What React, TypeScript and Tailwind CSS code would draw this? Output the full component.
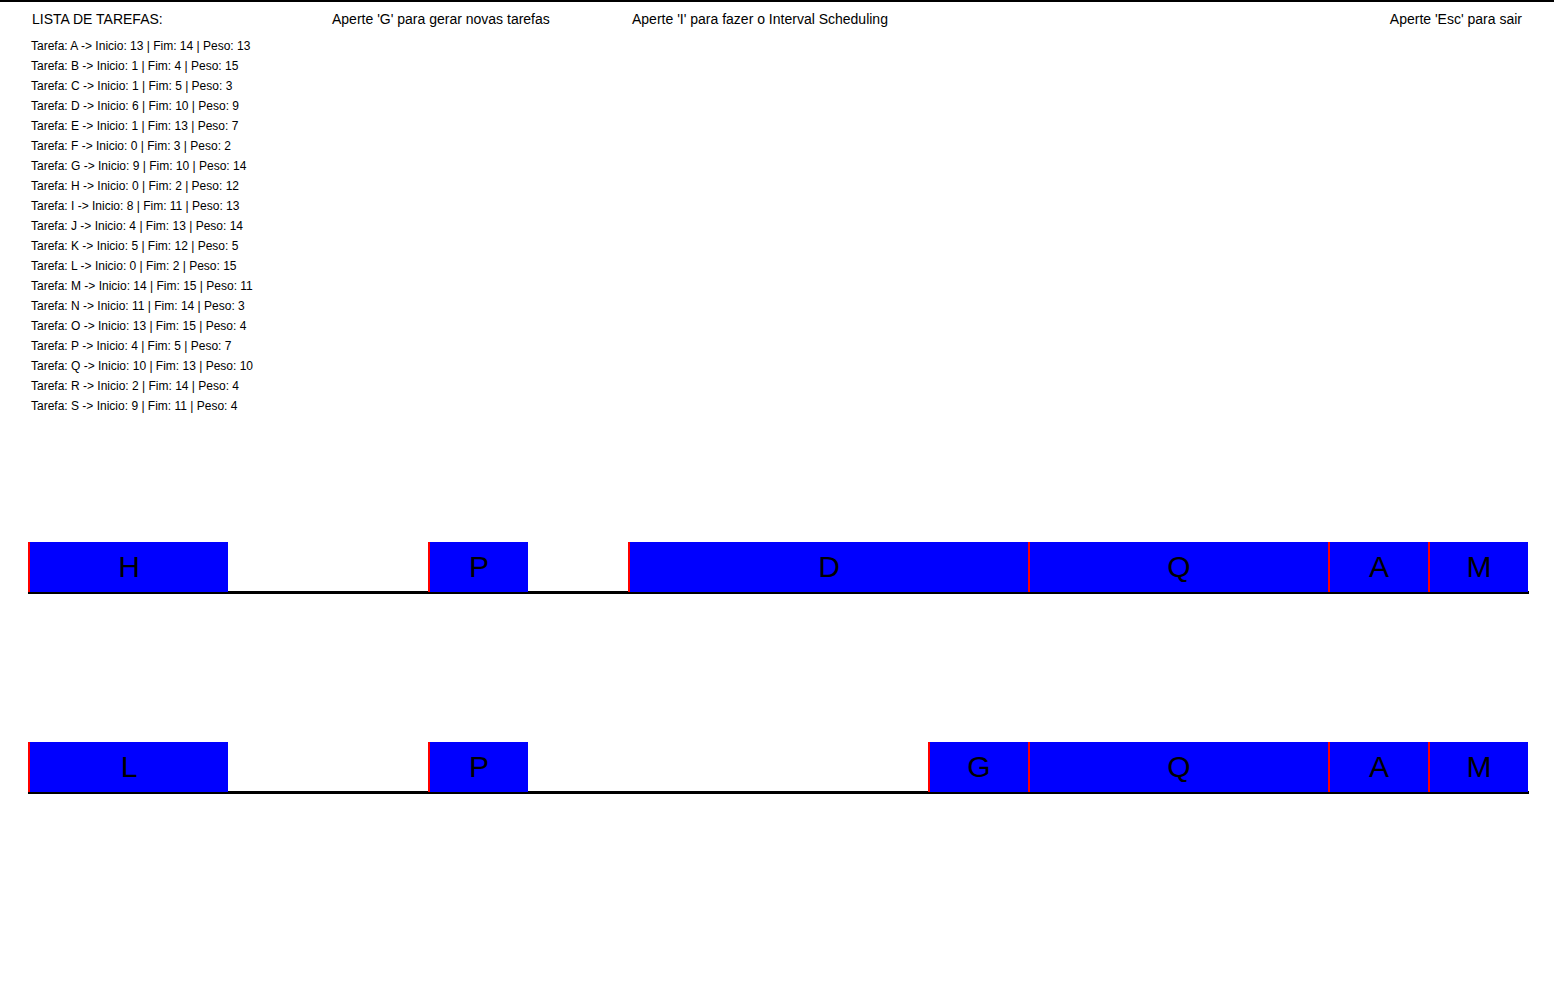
const TASKS = [
  "Tarefa: A -> Inicio: 13 | Fim: 14 | Peso: 13",
  "Tarefa: B -> Inicio: 1 | Fim: 4 | Peso: 15",
  "Tarefa: C -> Inicio: 1 | Fim: 5 | Peso: 3",
  "Tarefa: D -> Inicio: 6 | Fim: 10 | Peso: 9",
  "Tarefa: E -> Inicio: 1 | Fim: 13 | Peso: 7",
  "Tarefa: F -> Inicio: 0 | Fim: 3 | Peso: 2",
  "Tarefa: G -> Inicio: 9 | Fim: 10 | Peso: 14",
  "Tarefa: H -> Inicio: 0 | Fim: 2 | Peso: 12",
  "Tarefa: I -> Inicio: 8 | Fim: 11 | Peso: 13",
  "Tarefa: J -> Inicio: 4 | Fim: 13 | Peso: 14",
  "Tarefa: K -> Inicio: 5 | Fim: 12 | Peso: 5",
  "Tarefa: L -> Inicio: 0 | Fim: 2 | Peso: 15",
  "Tarefa: M -> Inicio: 14 | Fim: 15 | Peso: 11",
  "Tarefa: N -> Inicio: 11 | Fim: 14 | Peso: 3",
  "Tarefa: O -> Inicio: 13 | Fim: 15 | Peso: 4",
  "Tarefa: P -> Inicio: 4 | Fim: 5 | Peso: 7",
  "Tarefa: Q -> Inicio: 10 | Fim: 13 | Peso: 10",
  "Tarefa: R -> Inicio: 2 | Fim: 14 | Peso: 4",
  "Tarefa: S -> Inicio: 9 | Fim: 11 | Peso: 4",
]

type Slot = { name: string; start: number; end: number }

const GREEDY: Slot[] = [
  { name: "H", start: 0, end: 2 },
  { name: "P", start: 4, end: 5 },
  { name: "D", start: 6, end: 10 },
  { name: "Q", start: 10, end: 13 },
  { name: "A", start: 13, end: 14 },
  { name: "M", start: 14, end: 15 },
]

const WEIGHTED: Slot[] = [
  { name: "L", start: 0, end: 2 },
  { name: "P", start: 4, end: 5 },
  { name: "G", start: 9, end: 10 },
  { name: "Q", start: 10, end: 13 },
  { name: "A", start: 13, end: 14 },
  { name: "M", start: 14, end: 15 },
]

function Timeline({ slots }: { slots: Slot[] }) {
  return (
    <div className="relative ml-[28px] h-[52px] w-[1501px] border-b-[3px] border-black">
      <div className="flex h-[49px] w-[1500px]">
        {slots.map((s, i) => {
          const prev = i === 0 ? 0 : slots[i - 1].end
          return (
            <div
              key={s.name}
              className="flex h-[50px] shrink-0 items-center justify-center border-l-2 border-[#ff0000] bg-[#0000ff] text-[30px] leading-none text-black"
              style={{ width: (s.end - s.start) * 100, marginLeft: (s.start - prev) * 100 }}
            >
              {s.name}
            </div>
          )
        })}
      </div>
    </div>
  )
}

export default function App() {
  return (
    <div className="h-[1005px] w-[1554px] overflow-hidden border-t-2 border-black bg-white font-['Liberation_Sans',Arial,sans-serif] text-black">
      <div className="flex h-[34px] items-center pl-[32px] pr-[32px] text-sm">
        <span className="w-[300px]">LISTA DE TAREFAS:</span>
        <span className="w-[300px]">Aperte 'G' para gerar novas tarefas</span>
        <span>Aperte 'I' para fazer o Interval Scheduling</span>
        <span className="ml-auto">Aperte 'Esc' para sair</span>
      </div>
      <ul className="h-[506px] pl-[31px] pt-[-1px] text-xs leading-[20px]">
        {TASKS.map((t) => (
          <li key={t}>{t}</li>
        ))}
      </ul>
      <div className="flex flex-col gap-[148px]">
        <Timeline slots={GREEDY} />
        <Timeline slots={WEIGHTED} />
      </div>
    </div>
  )
}
